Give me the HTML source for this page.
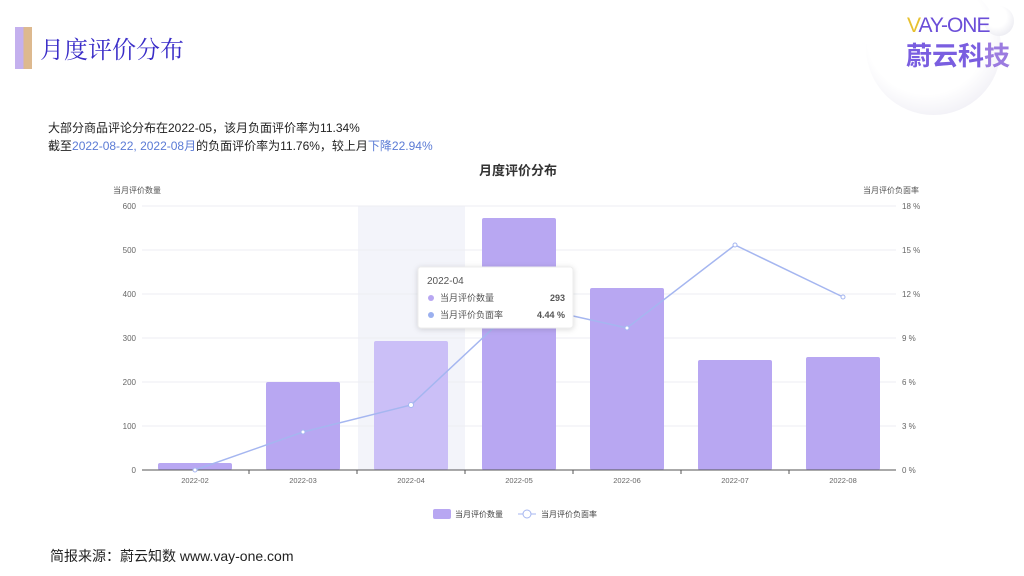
<!DOCTYPE html>
<html><head><meta charset="utf-8"><style>
body{margin:0;width:1024px;height:576px;background:#fff;overflow:hidden;position:relative;font-family:"Liberation Sans","Noto Sans CJK SC",sans-serif}
.t{position:absolute}
</style></head><body>
<div class="t" style="left:15px;top:27px;width:17px;height:42px;background:linear-gradient(90deg,#c4b0ee 50%,#ddb98f 50%)"></div>
<div class="t" style="left:40px;top:30px;font-size:24px;color:#3a2dc8;font-family:'Noto Serif CJK SC',serif">月度评价分布</div>
<div class="t" style="left:866px;top:-20px;width:135px;height:135px;border-radius:50%;background:radial-gradient(circle at 45% 40%,#fff 55%,#ecebf3 85%,#f6f6fa 100%)"></div>
<div class="t" style="left:984px;top:6px;width:30px;height:30px;border-radius:50%;background:radial-gradient(circle at 40% 35%,#fff 40%,#e6e6ee 90%)"></div>
<div class="t" style="left:907px;top:14px;font-size:21px;color:#6b4ed8;letter-spacing:-1px"><span style="color:#e7c130">V</span>AY-ONE</div>
<div class="t" style="left:906px;top:36px;font-size:26px;font-weight:bold;color:#7a5ee0">蔚云科<span style="color:#9b7be0">技</span></div>
<div class="t" style="left:48px;top:119px;font-size:12px;color:#222">大部分商品评论分布在2022-05，该月负面评价率为11.34%</div>
<div class="t" style="left:48px;top:137px;font-size:12px;color:#222">截至<span style="color:#5b7bd5">2022-08-22, 2022-08月</span>的负面评价率为11.76%，较上月<span style="color:#5b7bd5">下降22.94%</span></div>
<div class="t" style="left:50px;top:546px;font-size:14px;color:#222">简报来源：蔚云知数 www.vay-one.com</div>
<svg class="t" style="left:0;top:0" width="1024" height="576" font-family="Liberation Sans,Noto Sans CJK SC,sans-serif">
<text x="518" y="175" font-size="13" font-weight="bold" fill="#333" text-anchor="middle">月度评价分布</text>
<text x="113" y="193" font-size="8" fill="#555">当月评价数量</text>
<text x="863" y="193" font-size="8" fill="#555">当月评价负面率</text>
<rect x="358" y="206" width="107" height="264" fill="#f3f4fa"/>
<g stroke="#eceef3" stroke-width="1">
<line x1="142" y1="206" x2="896" y2="206"/><line x1="142" y1="250" x2="896" y2="250"/><line x1="142" y1="294" x2="896" y2="294"/><line x1="142" y1="338" x2="896" y2="338"/><line x1="142" y1="382" x2="896" y2="382"/><line x1="142" y1="426" x2="896" y2="426"/></g>
<g font-size="8" fill="#666" text-anchor="end">
<text x="136" y="209">600</text><text x="136" y="253">500</text><text x="136" y="297">400</text><text x="136" y="341">300</text><text x="136" y="385">200</text><text x="136" y="429">100</text><text x="136" y="473">0</text></g>
<g font-size="8" fill="#666">
<text x="902" y="209">18 %</text><text x="902" y="253">15 %</text><text x="902" y="297">12 %</text><text x="902" y="341">9 %</text><text x="902" y="385">6 %</text><text x="902" y="429">3 %</text><text x="902" y="473">0 %</text></g>
<g fill="#b8a7f2">
<rect x="158" y="463" width="74" height="7" rx="2"/>
<rect x="266" y="382" width="74" height="88" rx="2"/>
<rect x="374" y="341" width="74" height="129" rx="2" fill="#cbbff7"/>
<rect x="482" y="218" width="74" height="252" rx="2"/>
<rect x="590" y="288" width="74" height="182" rx="2"/>
<rect x="698" y="360" width="74" height="110" rx="2"/>
<rect x="806" y="357" width="74" height="113" rx="2"/></g>
<line x1="142" y1="470" x2="896" y2="470" stroke="#555"/>
<g stroke="#555"><line x1="249" y1="470" x2="249" y2="474"/><line x1="357" y1="470" x2="357" y2="474"/><line x1="465" y1="470" x2="465" y2="474"/><line x1="573" y1="470" x2="573" y2="474"/><line x1="681" y1="470" x2="681" y2="474"/><line x1="789" y1="470" x2="789" y2="474"/></g>
<g font-size="7.5" fill="#666" text-anchor="middle">
<text x="195" y="483">2022-02</text><text x="303" y="483">2022-03</text><text x="411" y="483">2022-04</text><text x="519" y="483">2022-05</text><text x="627" y="483">2022-06</text><text x="735" y="483">2022-07</text><text x="843" y="483">2022-08</text></g>
<polyline points="195,470 303,432 411,405 519,304 627,328 735,245 843,297" fill="none" stroke="#a5b6f0" stroke-width="1.5"/>
<g fill="#fff" stroke="#a5b6f0"><circle cx="195" cy="470" r="2"/><circle cx="303" cy="432" r="2"/><circle cx="411" cy="405" r="2.5"/><circle cx="627" cy="328" r="2"/><circle cx="735" cy="245" r="2"/><circle cx="843" cy="297" r="2"/></g>
<rect x="418" y="267" width="155" height="61" rx="3" fill="#fff" stroke="#eee" style="filter:drop-shadow(0 1px 3px rgba(0,0,0,.15))"/>
<text x="427" y="284" font-size="10" fill="#555">2022-04</text>
<circle cx="431" cy="298" r="3" fill="#b8a7f2"/><text x="440" y="301" font-size="9" fill="#555">当月评价数量</text><text x="565" y="301" font-size="9" fill="#555" font-weight="bold" text-anchor="end">293</text>
<circle cx="431" cy="315" r="3" fill="#9bb0ef"/><text x="440" y="318" font-size="9" fill="#555">当月评价负面率</text><text x="565" y="318" font-size="9" fill="#555" font-weight="bold" text-anchor="end">4.44 %</text>
<rect x="433" y="509" width="18" height="10" rx="2" fill="#b8a7f2"/><text x="455" y="517" font-size="8" fill="#444">当月评价数量</text>
<line x1="518" y1="514" x2="536" y2="514" stroke="#a5b6f0"/><circle cx="527" cy="514" r="4" fill="#fff" stroke="#a5b6f0"/><text x="541" y="517" font-size="8" fill="#444">当月评价负面率</text>
</svg>
</body></html>
